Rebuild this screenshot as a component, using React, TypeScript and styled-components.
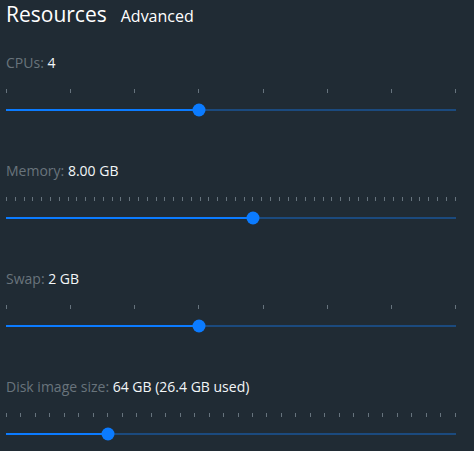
import React from 'react';
import styled, { createGlobalStyle } from 'styled-components';

const GlobalStyle = createGlobalStyle`
  html, body {
    margin: 0;
    padding: 0;
    background-color: #202b34;
  }
  body {
    font-family: "Open Sans", "Liberation Sans", sans-serif;
    color: #f1f4f7;
  }
`;

type Setting = {
  label: string;
  value: string;
  steps: number;
  index: number;
};

const settings: Setting[] = [
  { label: 'CPUs', value: '4', steps: 8, index: 3 },
  { label: 'Memory', value: '8.00 GB', steps: 52, index: 28 },
  { label: 'Swap', value: '2 GB', steps: 8, index: 3 },
  { label: 'Disk image size', value: '64 GB (26.4 GB used)', steps: 32, index: 7 },
];

const Slider = ({ steps, index }: { steps: number; index: number }) => {
  const pct = (index / (steps - 1)) * 100;
  return (
    <SliderBox>
      <Ticks>
        {Array.from({ length: steps }).map((_, i) => (
          <Tick key={i} />
        ))}
      </Ticks>
      <TrackArea>
        <Track>
          <Fill style={{ width: `${pct}%` }} />
          <Thumb style={{ left: `${pct}%` }} />
        </Track>
      </TrackArea>
    </SliderBox>
  );
};

const App = () => {
  return (
    <>
      <GlobalStyle />
      <Page>
        <Header>
          <Title>Resources</Title>
          <Tab>Advanced</Tab>
        </Header>
        {settings.map((s) => (
          <Section key={s.label}>
            <Label>
              <Name>{s.label}:</Name> <Value>{s.value}</Value>
            </Label>
            <Slider steps={s.steps} index={s.index} />
          </Section>
        ))}
      </Page>
    </>
  );
};

export default App;

const Page = styled.div`
  width: 474px;
  height: 451px;
  box-sizing: border-box;
  padding: 0 18px 0 6px;
  overflow: hidden;
`;

const Header = styled.div`
  display: flex;
  align-items: baseline;
  gap: 14px;
  height: 28px;
  margin-bottom: 25px;
`;

const Title = styled.h1`
  margin: 0;
  font-size: 21px;
  font-weight: 400;
  line-height: 28px;
  color: #ffffff;
`;

const Tab = styled.span`
  font-size: 16px;
  line-height: 28px;
  color: #ffffff;
`;

const Section = styled.div`
  height: 108px;
`;

const Label = styled.div`
  font-size: 14px;
  line-height: 20px;
  margin-bottom: 16px;
`;

const Name = styled.span`
  color: #69747c;
`;

const Value = styled.span`
  color: #f3f6f8;
`;

const SliderBox = styled.div`
  display: flex;
  flex-direction: column;
  gap: 10px;
`;

const Ticks = styled.div`
  display: flex;
  justify-content: space-between;
  height: 4px;
`;

const Tick = styled.span`
  width: 1px;
  height: 4px;
  background-color: #66737d;
`;

const TrackArea = styled.div`
  height: 14px;
  display: flex;
  align-items: center;
`;

const Track = styled.div`
  position: relative;
  flex: 1;
  height: 2px;
  background-color: #1b4a7e;
`;

const Fill = styled.div`
  height: 100%;
  background-color: #0b7bff;
`;

const Thumb = styled.span`
  position: absolute;
  top: 50%;
  width: 13px;
  height: 13px;
  border-radius: 50%;
  background-color: #0b7bff;
  transform: translate(-50%, -50%);
`;
